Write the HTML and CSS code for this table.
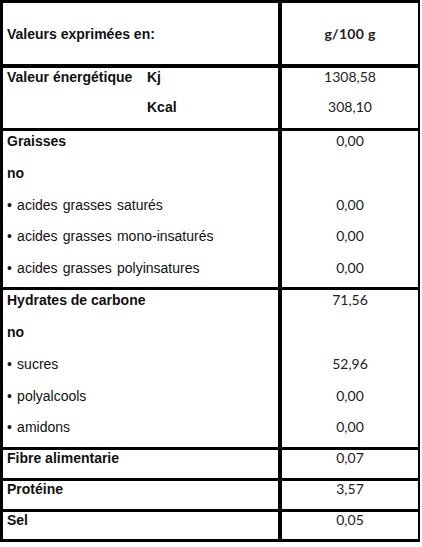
FILE: index.html
```html
<!DOCTYPE html>
<html lang="fr">
<head>
<meta charset="UTF-8">
<meta name="viewport" content="width=device-width, initial-scale=1.0">
<title>Valeurs nutritionnelles</title>
<link rel="stylesheet" href="styles.css">
</head>
<body>

<div class="sheet">
  <div class="row head">
    <div class="cell label">Valeurs exprimées en:</div>
    <div class="cell value unit">g/100 g</div>
  </div>

  <div class="row energy">
    <div class="cell label">
      <div class="line split"><b>Valeur énergétique</b><b>Kj</b></div>
      <div class="line split"><span></span><b>Kcal</b></div>
    </div>
    <div class="cell value">
      <div class="line">1308,58</div>
      <div class="line">308,10</div>
    </div>
  </div>

  <!-- Graisses -->
  <div class="row group">
    <div class="cell label">
      <div class="line"><b>Graisses</b></div>
      <div class="line"><b>no</b></div>
      <div class="line sub">• acides grasses saturés</div>
      <div class="line sub">• acides grasses mono-insaturés</div>
      <div class="line sub">• acides grasses polyinsatures</div>
    </div>
    <div class="cell value">
      <div class="line">0,00</div>
      <div class="line"></div>
      <div class="line">0,00</div>
      <div class="line">0,00</div>
      <div class="line">0,00</div>
    </div>
  </div>

  <!-- Hydrates de carbone -->
  <div class="row group carbs">
    <div class="cell label">
      <div class="line"><b>Hydrates de carbone</b></div>
      <div class="line"><b>no</b></div>
      <div class="line sub">• sucres</div>
      <div class="line sub">• polyalcools</div>
      <div class="line sub">• amidons</div>
    </div>
    <div class="cell value">
      <div class="line">71,56</div>
      <div class="line"></div>
      <div class="line">52,96</div>
      <div class="line">0,00</div>
      <div class="line">0,00</div>
    </div>
  </div>

  <div class="row single">
    <div class="cell label"><b>Fibre alimentarie</b></div>
    <div class="cell value">0,07</div>
  </div>
  <div class="row single">
    <div class="cell label"><b>Protéine</b></div>
    <div class="cell value">3,57</div>
  </div>
  <div class="row single last">
    <div class="cell label"><b>Sel</b></div>
    <div class="cell value">0,05</div>
  </div>
</div>

</body>
</html>
```

FILE: styles.css
```css
* { margin: 0; padding: 0; box-sizing: border-box; }
body { background: #fff; color: #111; font-family: 'Liberation Sans', Arial, sans-serif; font-size: 14px; }

.sheet { width: 420px; border-top: 3px solid #000; border-left: 3px solid #000; border-right: 2px solid #000; }

.row { display: grid; grid-template-columns: 279px 136px; border-bottom: 3px solid #000; }
.cell.label { border-right: 4px solid #000; padding-left: 4px; }
.cell.value { text-align: center; font-family: 'Lato', 'Liberation Sans', sans-serif; font-size: 14px; color: #222; }

b { font-weight: bold; }
.sub { word-spacing: 1.3px; }

.head { height: 65px; border-bottom-width: 4px; }
.head .cell { display: flex; align-items: center; }
.head .label { font-weight: bold; }
.head .unit { justify-content: center; font-weight: bold; letter-spacing: 0.3px; }

.energy .cell { padding-bottom: 12px; }
.energy .line { height: 18px; line-height: 18px; margin-bottom: 12px; }
.energy .line:last-child { margin-bottom: 0; }
.split { display: grid; grid-template-columns: 140px auto; }

.group .cell { padding-bottom: 9px; }
.group.carbs .cell { padding-bottom: 10px; }
.group .line { height: 20px; line-height: 20px; margin-bottom: 11.8px; }
.group .line:last-child { margin-bottom: 0; }

.single { height: 31px; }
.single .cell { line-height: 16px; }
.single.last { height: 30px; }
```
